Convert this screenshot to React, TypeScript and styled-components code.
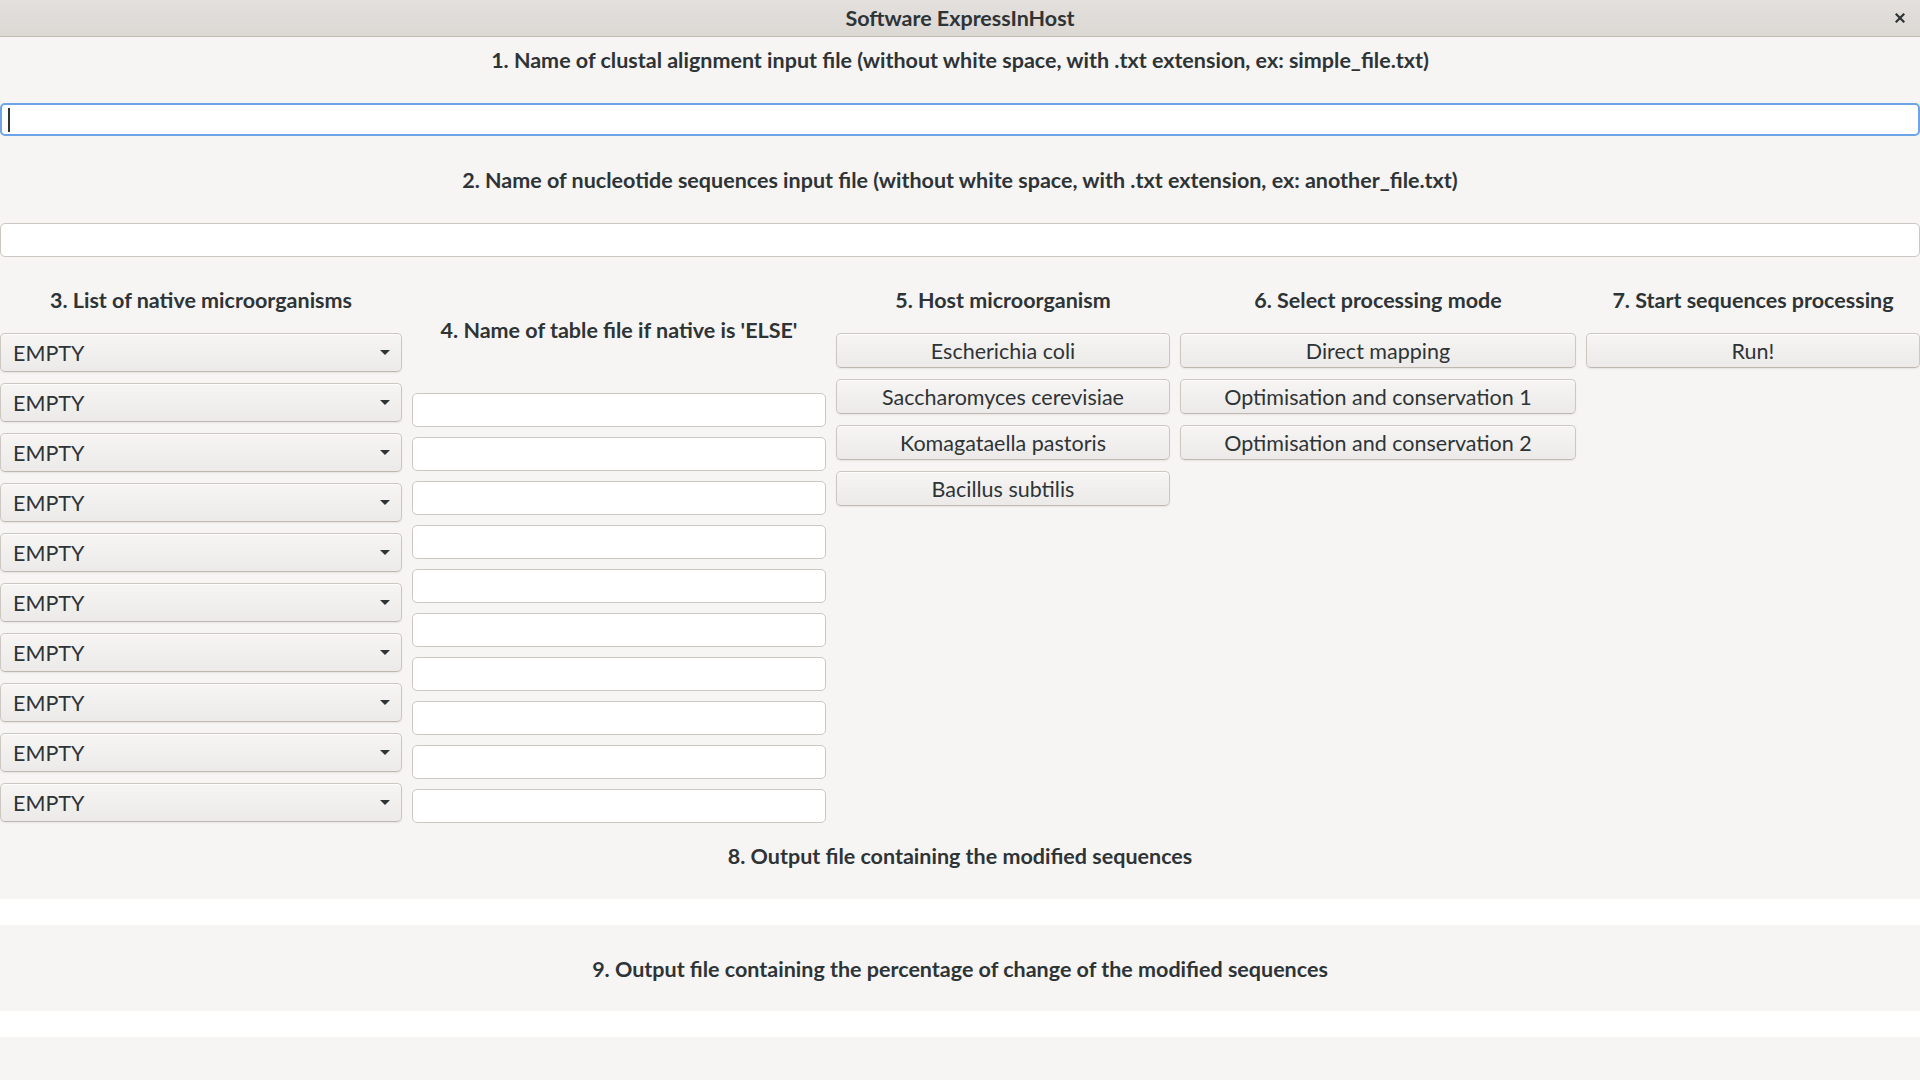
import React from "react";
import styled, { createGlobalStyle } from "styled-components";

const GlobalStyle = createGlobalStyle`
  html, body {
    margin: 0;
    padding: 0;
    background: #f6f5f4;
  }
  body {
    font-family: "Lato", "Noto Sans", sans-serif;
    color: #2e3436;
  }
  * { box-sizing: border-box; }
`;

const Window = styled.div`
  width: 1920px;
  height: 1080px;
  display: flex;
  flex-direction: column;
  background: #f6f5f4;
  overflow: hidden;
`;

const TitleBar = styled.header`
  position: relative;
  height: 37px;
  flex: none;
  display: flex;
  align-items: center;
  justify-content: center;
  background: linear-gradient(to bottom, #e3e0dd, #dcd8d4);
  border-bottom: 1px solid #c0bab3;
`;

const Title = styled.h1`
  margin: 0;
  font-size: 21.5px;
  font-weight: 700;
  color: #2e3436;
`;

const CloseButton = styled.button`
  position: absolute;
  right: 10px;
  top: 8px;
  width: 20px;
  height: 20px;
  padding: 0;
  border: none;
  background: transparent;
  display: flex;
  align-items: center;
  justify-content: center;
`;

const Content = styled.main`
  display: flex;
  flex-direction: column;
`;

const SectionLabel = styled.div<{ $top: number; $bottom: number }>`
  text-align: center;
  font-size: 21.5px;
  font-weight: 700;
  line-height: 24px;
  margin-top: ${(p) => p.$top}px;
  margin-bottom: ${(p) => p.$bottom}px;
`;

const FieldFrame = styled.div<{ $focused?: boolean; $h: number }>`
  height: ${(p) => p.$h}px;
  background: #ffffff;
  border: ${(p) => (p.$focused ? "2px solid #6fa3e8" : "1px solid #cdc7c2")};
  border-radius: 5px;
  display: flex;
  align-items: center;
  padding-left: ${(p) => (p.$focused ? 6 : 7)}px;
`;

const Caret = styled.span`
  width: 2px;
  height: 24px;
  background: #2e3436;
`;

const TextEntry = styled.input<{ $h: number }>`
  display: block;
  width: 100%;
  height: ${(p) => p.$h}px;
  background: #ffffff;
  border: 1px solid #cdc7c2;
  border-radius: 5px;
  padding: 0 8px;
  font-family: inherit;
  font-size: 21.5px;
  color: #2e3436;
  outline: none;
`;

const OutputBand = styled.div`
  height: 26px;
  background: #ffffff;
`;

const Grid = styled.div`
  display: grid;
  grid-template-columns: 402px 414px 334px 396px 334px;
  column-gap: 10px;
  margin-top: 31px;
  align-items: start;
`;

const Column = styled.section<{ $headerTop?: number; $headerGap: number; $gap: number }>`
  display: flex;
  flex-direction: column;
  gap: ${(p) => p.$gap}px;

  & > h2 {
    margin-top: ${(p) => p.$headerTop ?? 0}px;
    margin-bottom: ${(p) => p.$headerGap - p.$gap}px;
  }
`;

const ColumnHeader = styled.h2`
  margin: 0;
  text-align: center;
  font-size: 21.5px;
  font-weight: 700;
  line-height: 24px;
  white-space: nowrap;
`;

const buttonLook = `
  background: linear-gradient(to top, #edebe9 2px, #f6f5f4);
  border: 1px solid #cdc7c2;
  border-bottom-color: #bfb8b1;
  border-radius: 5px;
  box-shadow: inset 0 1px rgba(255,255,255,0.8), 0 1px 2px rgba(0,0,0,0.07);
  color: #2e3436;
  font-family: "Lato", "Noto Sans", sans-serif;
  font-size: 21.5px;
`;

const Combo = styled.div`
  ${buttonLook}
  height: 39px;
  display: flex;
  align-items: center;
  justify-content: space-between;
  padding: 0 10px 0 12px;
`;

const ComboArrow = styled.span`
  width: 0;
  height: 0;
  border-left: 5px solid transparent;
  border-right: 5px solid transparent;
  border-top: 5px solid #2e3436;
  margin-right: 1px;
`;

const ActionButton = styled.button`
  ${buttonLook}
  height: 35px;
  width: 100%;
  padding: 0 8px;
  text-align: center;
  cursor: pointer;
`;

const natives = Array.from({ length: 10 }, () => "EMPTY");
const hosts = ["Escherichia coli", "Saccharomyces cerevisiae", "Komagataella pastoris", "Bacillus subtilis"];
const modes = ["Direct mapping", "Optimisation and conservation 1", "Optimisation and conservation 2"];

export default function App() {
  return (
    <>
      <GlobalStyle />
      <Window>
        <TitleBar>
          <Title>Software ExpressInHost</Title>
          <CloseButton aria-label="close">
            <svg width="10" height="10" viewBox="0 0 10 10">
              <path d="M1.5 1.5 L8.5 8.5 M8.5 1.5 L1.5 8.5" stroke="#2e3436" strokeWidth="2.2" strokeLinecap="square" />
            </svg>
          </CloseButton>
        </TitleBar>
        <Content>
          <SectionLabel $top={11} $bottom={31}>
            1. Name of clustal alignment input file (without white space, with .txt extension, ex: simple_file.txt)
          </SectionLabel>
          <FieldFrame $focused $h={33}>
            <Caret />
          </FieldFrame>
          <SectionLabel $top={32} $bottom={31}>
            2. Name of nucleotide sequences input file (without white space, with .txt extension, ex: another_file.txt)
          </SectionLabel>
          <TextEntry $h={34} />
          <Grid>
            <Column $headerGap={21} $gap={11}>
              <ColumnHeader>3. List of native microorganisms</ColumnHeader>
              {natives.map((n, i) => (
                <Combo key={i}>
                  <span>{n}</span>
                  <ComboArrow />
                </Combo>
              ))}
            </Column>
            <Column $headerTop={30} $headerGap={51} $gap={10}>
              <ColumnHeader>4. Name of table file if native is 'ELSE'</ColumnHeader>
              {natives.map((_, i) => (
                <TextEntry key={i} $h={34} />
              ))}
            </Column>
            <Column $headerGap={21} $gap={11}>
              <ColumnHeader>5. Host microorganism</ColumnHeader>
              {hosts.map((h) => (
                <ActionButton key={h}>{h}</ActionButton>
              ))}
            </Column>
            <Column $headerGap={21} $gap={11}>
              <ColumnHeader>6. Select processing mode</ColumnHeader>
              {modes.map((m) => (
                <ActionButton key={m}>{m}</ActionButton>
              ))}
            </Column>
            <Column $headerGap={21} $gap={11}>
              <ColumnHeader>7. Start sequences processing</ColumnHeader>
              <ActionButton>Run!</ActionButton>
            </Column>
          </Grid>
          <SectionLabel $top={21} $bottom={31}>
            8. Output file containing the modified sequences
          </SectionLabel>
          <OutputBand />
          <SectionLabel $top={32} $bottom={30}>
            9. Output file containing the percentage of change of the modified sequences
          </SectionLabel>
          <OutputBand />
        </Content>
      </Window>
    </>
  );
}
